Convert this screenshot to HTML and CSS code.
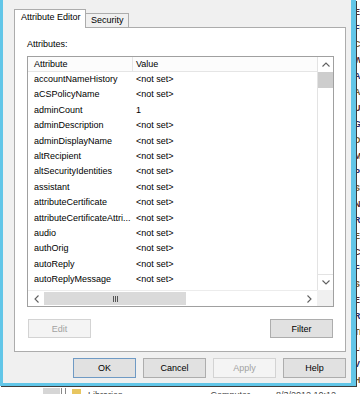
FILE: index.html
```html
<!DOCTYPE html>
<html>
<head>
<meta charset="utf-8">
<link rel="stylesheet" href="styles.css">
</head>
<body>
<div class="desktop">
  <div class="behind-right">
    <div class="c1">Er</div><div class="c2">Fi</div><div class="c3">Co</div><div class="c1">Wa</div>
    <div class="c2">Ad</div><div class="c3">Ac</div><div class="c1">Us</div><div class="c2">Gr</div>
    <div class="c3">Do</div><div class="c1">Ma</div><div class="c2">Pr</div><div class="c3">Se</div>
    <div class="c1">Ne</div><div class="c2">Re</div><div class="c3">Ex</div><div class="c1">Cl</div>
    <div class="c2">Fo</div><div class="c3">Sh</div><div class="c1">Ed</div><div class="c2">Ru</div>
    <div class="c3">Tr</div><div class="c1">Lo</div><div class="c2">Vi</div><div class="c3">Ho</div>
  </div>
  <div class="behind-bottom">
    <span class="bb-box"></span>
    <span class="bb-lines"></span>
    <span class="bb-folder"></span>
    <span class="bb-text">Libraries</span>
    <span class="bb-text bb-t2">Computer</span>
    <span class="bb-text bb-t3">8/3/2012 10:12</span>
  </div>

  <div class="window">
    <div class="tabs">
      <div class="tab active">Attribute Editor</div>
      <div class="tab">Security</div>
    </div>
    <div class="panel">
      <div class="label">Attributes:</div>
      <div class="list">
        <div class="list-main">
          <div class="list-body">
            <div class="header">
              <span class="col-attr">Attribute</span>
              <span class="col-val">Value</span>
            </div>
            <div class="row"><span class="col-attr">accountNameHistory</span><span class="col-val">&lt;not set&gt;</span></div>
            <div class="row"><span class="col-attr">aCSPolicyName</span><span class="col-val">&lt;not set&gt;</span></div>
            <div class="row"><span class="col-attr">adminCount</span><span class="col-val">1</span></div>
            <div class="row"><span class="col-attr">adminDescription</span><span class="col-val">&lt;not set&gt;</span></div>
            <div class="row"><span class="col-attr">adminDisplayName</span><span class="col-val">&lt;not set&gt;</span></div>
            <div class="row"><span class="col-attr">altRecipient</span><span class="col-val">&lt;not set&gt;</span></div>
            <div class="row"><span class="col-attr">altSecurityIdentities</span><span class="col-val">&lt;not set&gt;</span></div>
            <div class="row"><span class="col-attr">assistant</span><span class="col-val">&lt;not set&gt;</span></div>
            <div class="row"><span class="col-attr">attributeCertificate</span><span class="col-val">&lt;not set&gt;</span></div>
            <div class="row"><span class="col-attr">attributeCertificateAttri...</span><span class="col-val">&lt;not set&gt;</span></div>
            <div class="row"><span class="col-attr">audio</span><span class="col-val">&lt;not set&gt;</span></div>
            <div class="row"><span class="col-attr">authOrig</span><span class="col-val">&lt;not set&gt;</span></div>
            <div class="row"><span class="col-attr">autoReply</span><span class="col-val">&lt;not set&gt;</span></div>
            <div class="row"><span class="col-attr">autoReplyMessage</span><span class="col-val">&lt;not set&gt;</span></div>
          </div>
          <div class="vscroll">
            <div class="sbtn"><svg width="8" height="5" viewBox="0 0 8 5"><polyline points="0.5,4.5 4,1 7.5,4.5" fill="none" stroke="#606060" stroke-width="1.1"/></svg></div>
            <div class="vthumb"></div>
            <div class="vtrack"></div>
            <div class="sbtn down"><svg width="8" height="5" viewBox="0 0 8 5"><polyline points="0.5,0.5 4,4 7.5,0.5" fill="none" stroke="#606060" stroke-width="1.1"/></svg></div>
          </div>
        </div>
        <div class="hrow">
          <div class="hscroll">
            <div class="hbtn"><svg width="5" height="8" viewBox="0 0 5 8"><polyline points="4.5,0.5 1,4 4.5,7.5" fill="none" stroke="#606060" stroke-width="1.1"/></svg></div>
            <div class="hthumb"><svg width="5" height="6" viewBox="0 0 5 6"><path d="M0.5 0v6M2.5 0v6M4.5 0v6" stroke="#555" stroke-width="1"/></svg></div>
            <div class="htrack"></div>
            <div class="hbtn"><svg width="5" height="8" viewBox="0 0 5 8"><polyline points="0.5,0.5 4,4 0.5,7.5" fill="none" stroke="#606060" stroke-width="1.1"/></svg></div>
          </div>
          <div class="corner"></div>
        </div>
      </div>
      <div class="panel-buttons">
        <div class="btn disabled">Edit</div>
        <div class="btn">Filter</div>
      </div>
    </div>
    <div class="dialog-buttons">
      <div class="btn big default">OK</div>
      <div class="btn big">Cancel</div>
      <div class="btn big disabled">Apply</div>
      <div class="btn big">Help</div>
    </div>
  </div>
</div>
</body>
</html>
```

FILE: styles.css
```css
html, body {
  margin: 0;
  padding: 0;
}
body {
  background: #ffffff;
  font-family: "Liberation Sans", Arial, sans-serif;
  font-size: 9px;
  color: #000;
  overflow: hidden;
}
.desktop {
  position: relative;
  width: 360px;
  height: 394px;
  overflow: hidden;
}

/* content of the window behind the dialog */
.behind-right {
  position: absolute;
  left: 354px;
  top: 4px;
  font-size: 9px;
  line-height: 16px;
  font-weight: bold;
}
.c1 { color: #5a2a2a; }
.c2 { color: #2a2a6a; }
.c3 { color: #7a5a2a; }
.behind-bottom {
  position: absolute;
  left: 43px;
  top: 388px;
  display: flex;
  align-items: flex-start;
  height: 10px;
}
.bb-box {
  width: 17px;
  height: 8px;
  background: #d6d6d6;
}
.bb-lines {
  width: 3px;
  height: 8px;
  margin-left: 1px;
  border-left: 1px solid #888;
  border-right: 1px solid #888;
}
.bb-folder {
  width: 9px;
  height: 8px;
  margin-left: 6px;
  margin-top: 1px;
  background: #e8c660;
}
.bb-text {
  margin-left: 7px;
  font-size: 9px;
  line-height: 10px;
  color: #444;
  margin-top: 2px;
}
.bb-t2 { margin-left: 88px; }
.bb-t3 { margin-left: 26px; }

/* dialog window */
.window {
  position: absolute;
  left: 0;
  top: 0;
  box-sizing: border-box;
  width: 356px;
  height: 386px;
  background: #f0f0f0;
  border-left: 3px solid #62c6e8;
  border-right: 5px solid #62c6e8;
  border-bottom: 3px solid #62c6e8;
  box-shadow: 1px 1px 0 #3d3d3d;
  padding: 9px 5px 5px 11px;
  display: flex;
  flex-direction: column;
}

.tabs {
  display: flex;
  align-items: flex-end;
  height: 18px;
}
.tab {
  box-sizing: border-box;
  height: 14px;
  width: 43px;
  padding-left: 5px;
  line-height: 13px;
  background: #f0f0f0;
  border: 1px solid #acacac;
  border-left: none;
  border-bottom: none;
  white-space: nowrap;
}
.tab.active {
  position: relative;
  z-index: 1;
  width: 72px;
  height: 19px;
  margin-bottom: -1px;
  padding-left: 6px;
  line-height: 15px;
  background: #ffffff;
  border-left: 1px solid #acacac;
}

.panel {
  box-sizing: border-box;
  height: 325px;
  background: #ffffff;
  border: 1px solid #acacac;
  padding: 11px 11px 0 12px;
  display: flex;
  flex-direction: column;
}
.label {
  height: 11px;
  line-height: 11px;
  margin-bottom: 6px;
}

.list {
  box-sizing: border-box;
  width: 307px;
  height: 251px;
  border: 1px solid #a0a0a0;
  display: flex;
  flex-direction: column;
}
.list-main {
  display: flex;
  height: 233px;
}
.list-body {
  width: 289px;
  overflow: hidden;
}
.header {
  box-sizing: border-box;
  display: flex;
  height: 15px;
  line-height: 14px;
  background: #fcfcfc;
  border-bottom: 1px solid #e5e5e5;
}
.header .col-attr {
  border-right: 1px solid #e5e5e5;
}
.row {
  display: flex;
  height: 15.4px;
  line-height: 15.4px;
}
.col-attr {
  box-sizing: border-box;
  width: 105px;
  padding-left: 6px;
  white-space: nowrap;
  overflow: hidden;
}
.col-val {
  padding-left: 3px;
  white-space: nowrap;
}

.vscroll {
  box-sizing: border-box;
  width: 16px;
  border-left: 1px solid #e3e3e3;
  background: #ffffff;
  display: flex;
  flex-direction: column;
}
.sbtn {
  height: 15px;
  display: flex;
  align-items: center;
  justify-content: center;
}
.sbtn.down {
  height: 16px;
  box-sizing: border-box;
  border-top: 1px solid #e3e3e3;
}
.vthumb {
  height: 16px;
  background: #cdcdcd;
}
.vtrack {
  flex: 1;
}

.hrow {
  display: flex;
  height: 16px;
}
.hscroll {
  box-sizing: border-box;
  width: 289px;
  display: flex;
  background: #ffffff;
  border-top: 1px solid #ececec;
}
.hbtn {
  width: 16px;
  display: flex;
  align-items: center;
  justify-content: center;
}
.hthumb {
  width: 142px;
  margin: 1px 0 1px 0;
  background: #dadada;
  display: flex;
  align-items: center;
  justify-content: center;
}
.htrack {
  flex: 1;
}
.corner {
  width: 16px;
  background: #f0f0f0;
}

.panel-buttons {
  box-sizing: border-box;
  width: 307px;
  margin-top: 12px;
  padding: 0 1px;
  display: flex;
  justify-content: space-between;
}
.btn {
  box-sizing: border-box;
  width: 63px;
  height: 19px;
  border: 1px solid #adadad;
  background: #e1e1e1;
  display: flex;
  align-items: center;
  justify-content: center;
  color: #000;
}
.btn.big {
  height: 20px;
}
.btn.disabled {
  background: #f4f4f4;
  border-color: #d3d3d3;
  color: #a2a2a2;
}
.btn.default {
  border-color: #6f9ac4;
}
.dialog-buttons {
  margin-top: 6px;
  display: flex;
  justify-content: flex-end;
  gap: 7px;
}
```
